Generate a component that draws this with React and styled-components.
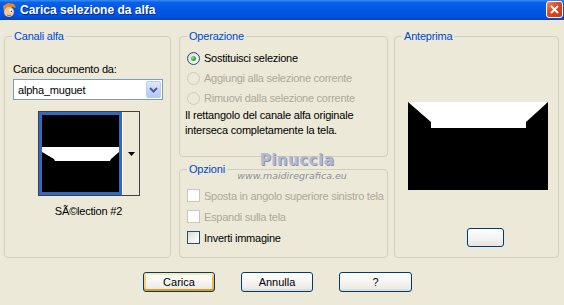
import React from "react";
import styled, { createGlobalStyle, css } from "styled-components";

const GlobalStyle = createGlobalStyle`
  html, body {
    margin: 0;
    padding: 0;
    background: #ece9d8;
  }
  body {
    font-family: "Liberation Sans", Arial, sans-serif;
    font-size: 11px;
    letter-spacing: -0.2px;
    color: #000;
  }
`;

const Window = styled.div`
  position: relative;
  width: 564px;
  height: 305px;
  background: #ece9d8;
  overflow: hidden;
  display: flex;
  flex-direction: column;
`;

const TitleBar = styled.div`
  height: 20px;
  display: flex;
  align-items: center;
  background: linear-gradient(
    to bottom,
    #3a8cf4 0%,
    #0a62e4 12%,
    #0058e6 45%,
    #0052dd 80%,
    #0046c4 100%
  );
`;

const TitleIcon = styled.svg`
  width: 16px;
  height: 16px;
  margin: 0 3px 0 1px;
  flex-shrink: 0;
`;

const TitleText = styled.div`
  flex: 1;
  color: #fff;
  font-size: 12px;
  font-weight: bold;
  letter-spacing: 0;
  text-shadow: 1px 1px 0 #0a2a8a;
`;

const CloseButton = styled.div`
  width: 17px;
  height: 17px;
  margin: 0 1px 1px 0;
  box-sizing: border-box;
  border: 1px solid #fff;
  border-radius: 3px;
  background: linear-gradient(135deg, #f08a6a 0%, #e0461f 45%, #c83a12 100%);
  display: flex;
  align-items: center;
  justify-content: center;
`;

const Body = styled.div`
  flex: 1;
  padding: 16px 0 0 4px;
  display: flex;
  flex-direction: column;
`;

const GroupsRow = styled.div`
  display: flex;
  height: 222px;
`;

const MiddleColumn = styled.div`
  display: flex;
  flex-direction: column;
  justify-content: space-between;
  margin: 0 6px 0 8px;
`;

const Group = styled.div`
  position: relative;
  box-sizing: border-box;
  width: ${(p) => p.$width}px;
  height: ${(p) => p.$height}px;
  border: 1px solid #d0d0bf;
  border-radius: 4px;
  display: flex;
  flex-direction: column;
  padding: ${(p) => p.$pad || "0"};
`;

const Legend = styled.span`
  position: absolute;
  top: -7px;
  left: 7px;
  padding: 0 2px;
  line-height: 13px;
  background: #ece9d8;
  color: #0046d5;
`;

const Label = styled.div`
  line-height: 13px;
`;

const Combo = styled.div`
  margin-top: 3px;
  width: 150px;
  height: 21px;
  box-sizing: border-box;
  border: 1px solid #7f9db9;
  background: #fff;
  display: flex;
  align-items: center;
  padding: 1px;
`;

const ComboText = styled.div`
  flex: 1;
  padding-left: 3px;
`;

const ComboButton = styled.div`
  width: 15px;
  height: 17px;
  box-sizing: border-box;
  border: 1px solid #b9cdf7;
  border-radius: 2px;
  background: linear-gradient(to bottom, #dfe9fd 0%, #c6d6fb 50%, #b2c8f8 100%);
  display: flex;
  align-items: center;
  justify-content: center;
`;

const ThumbRow = styled.div`
  margin: 11px 0 0 25px;
  align-self: flex-start;
  display: flex;
  border: 1px solid #404040;
`;

const ThumbImage = styled.div`
  width: 77px;
  height: 77px;
  border: 3px solid #316ac5;
  background: #000;
  display: flex;
`;

const ThumbDrop = styled.div`
  width: 16px;
  background: #ece9d8;
  border-left: 1px solid #fff;
  display: flex;
  align-items: center;
  justify-content: center;
`;

const Caption = styled.div`
  margin-top: 9px;
  text-align: center;
  line-height: 13px;
  padding-right: 6px;
`;

const OptionRow = styled.div`
  height: ${(p) => p.$h}px;
  display: flex;
  align-items: center;
  gap: 4px;
  white-space: nowrap;
  letter-spacing: -0.25px;
  color: ${(p) => (p.$disabled ? "#aca899" : "#000")};
`;

const Radio = styled.span`
  width: 13px;
  height: 13px;
  flex-shrink: 0;
  box-sizing: border-box;
  border-radius: 50%;
  display: flex;
  align-items: center;
  justify-content: center;
  ${(p) =>
    p.$disabled
      ? css`
          border: 1px solid #cfccbd;
          background: #ece9d8;
        `
      : css`
          border: 1px solid #1c5180;
          background: radial-gradient(circle at 65% 65%, #ffffff 0%, #f0efe8 40%, #d6d3c8 100%);
        `}
`;

const RadioDot = styled.span`
  width: 5px;
  height: 5px;
  border-radius: 50%;
  background: radial-gradient(circle at 35% 35%, #8ee28e 0%, #2fa52f 60%, #1f7f1f 100%);
`;

const Check = styled.span`
  width: 13px;
  height: 13px;
  flex-shrink: 0;
  box-sizing: border-box;
  ${(p) =>
    p.$disabled
      ? css`
          border: 1px solid #cac8bb;
          background: #fff;
        `
      : css`
          border: 1px solid #1c5180;
          background: linear-gradient(135deg, #dcdbd5 0%, #f4f4f0 60%, #ffffff 100%);
        `}
`;

const Desc = styled.div`
  line-height: 15px;
  margin-left: -2px;
`;

const Preview = styled.svg`
  margin-top: 65px;
  margin-left: 3px;
  align-self: center;
  display: block;
`;

const Button = styled.button`
  font-family: "Liberation Sans", Arial, sans-serif;
  font-size: 11px;
  color: #000;
  width: ${(p) => p.$w || 72}px;
  height: ${(p) => p.$h || 20}px;
  padding: 0;
  box-sizing: border-box;
  border: 1px solid #003c74;
  border-radius: 3px;
  background: linear-gradient(to bottom, #ffffff 0%, #f7f7f4 40%, #ecebe4 85%, #d8d6cc 100%);
  ${(p) =>
    p.$default &&
    css`
      box-shadow: inset 0 2px 0 #ffe9a8, inset 0 -2px 0 #e59a18, inset 2px 0 0 #fbd27a,
        inset -2px 0 0 #f5b83c;
    `}
`;

const SmallButton = styled(Button)`
  margin-top: 38px;
  margin-left: 18px;
  align-self: center;
  background: linear-gradient(to bottom, #ffffff 0%, #f4f4f2 50%, #e6e5df 100%);
`;

const ButtonRow = styled.div`
  margin-top: 14px;
  display: flex;
  gap: 26px;
  padding-left: 139px;
`;

const Watermark = styled.div`
  position: absolute;
  left: 226px;
  top: 151px;
  width: 132px;
  text-align: center;
  letter-spacing: 0;
  pointer-events: none;
`;

const WaterName = styled.div`
  font-family: "DejaVu Sans", sans-serif;
  font-weight: bold;
  font-size: 15px;
  line-height: 19px;
  letter-spacing: 0.5px;
  color: #b3b7d0;
  text-shadow: 1px 1px 0 #8e92ad;
  padding-left: 10px;
`;

const WaterUrl = styled.div`
  font-family: "DejaVu Sans", sans-serif;
  font-size: 9.5px;
  line-height: 12px;
  font-style: italic;
  color: #8d8d9c;
`;

const AppIcon = () => (
  <TitleIcon viewBox="0 0 16 16">
    <path d="M2 4 L7 1 L13 2 L15 6 L12 5 L9 6 L5 6 L3 9 Z" fill="#e8872a" />
    <ellipse cx="8" cy="10" rx="5" ry="5" fill="#f6c79a" />
    <ellipse cx="10" cy="9" rx="1.6" ry="2" fill="#fff" />
    <circle cx="10.3" cy="9.3" r="0.8" fill="#1a3c8a" />
    <path d="M6 13 Q8 14.5 10 13" stroke="#a0522d" strokeWidth="0.8" fill="none" />
  </TitleIcon>
);

const App = () => {
  return (
    <Window>
      <GlobalStyle />
      <TitleBar>
        <AppIcon />
        <TitleText>Carica selezione da alfa</TitleText>
        <CloseButton>
          <svg width="11" height="11" viewBox="0 0 11 11">
            <path d="M2 2 L9 9 M9 2 L2 9" stroke="#fff" strokeWidth="2" />
          </svg>
        </CloseButton>
      </TitleBar>

      <Body>
        <GroupsRow>
          <Group $width={167} $height={222} $pad="26px 0 0 8px">
            <Legend>Canali alfa</Legend>
            <Label>Carica documento da:</Label>
            <Combo>
              <ComboText>alpha_muguet</ComboText>
              <ComboButton>
                <svg width="9" height="6" viewBox="0 0 9 6">
                  <path d="M1 1 L4.5 4.5 L8 1" stroke="#4d6185" strokeWidth="2" fill="none" />
                </svg>
              </ComboButton>
            </Combo>
            <ThumbRow>
              <ThumbImage>
                <svg width="77" height="77" viewBox="0 0 77 77">
                  <polygon
                    points="0,32 77,32 77,37 69,44 68,46 13,46 12,44 0,37"
                    fill="#fff"
                  />
                </svg>
              </ThumbImage>
              <ThumbDrop>
                <svg width="7" height="4" viewBox="0 0 7 4">
                  <polygon points="0,0 7,0 3.5,4" fill="#000" />
                </svg>
              </ThumbDrop>
            </ThumbRow>
            <Caption>SÃ©lection #2</Caption>
          </Group>

          <MiddleColumn>
            <Group $width={209} $height={121} $pad="11px 0 0 7px">
              <Legend>Operazione</Legend>
              <OptionRow $h={20}>
                <Radio>
                  <RadioDot />
                </Radio>
                Sostituisci selezione
              </OptionRow>
              <OptionRow $h={20} $disabled>
                <Radio $disabled />
                Aggiungi alla selezione corrente
              </OptionRow>
              <OptionRow $h={20} $disabled>
                <Radio $disabled />
                Rimuovi dalla selezione corrente
              </OptionRow>
              <Desc>
                Il rettangolo del canale alfa originale
                <br />
                interseca completamente la tela.
              </Desc>
            </Group>

            <Group $width={209} $height={89} $pad="15px 0 0 7px">
              <Legend>Opzioni</Legend>
              <OptionRow $h={21} $disabled>
                <Check $disabled />
                Sposta in angolo superiore sinistro tela
              </OptionRow>
              <OptionRow $h={21} $disabled>
                <Check $disabled />
                Espandi sulla tela
              </OptionRow>
              <OptionRow $h={21}>
                <Check />
                Inverti immagine
              </OptionRow>
            </Group>
          </MiddleColumn>

          <Group $width={165} $height={222}>
            <Legend>Anteprima</Legend>
            <Preview width="140" height="88" viewBox="0 0 140 88">
              <rect width="140" height="88" fill="#000" />
              <polygon points="0,0 140,0 118,20 118,26 23,26 23,20" fill="#fff" />
            </Preview>
            <SmallButton $w={37} $h={19} />
          </Group>
        </GroupsRow>

        <ButtonRow>
          <Button $default>Carica</Button>
          <Button>Annulla</Button>
          <Button $w={73}>?</Button>
        </ButtonRow>
      </Body>

      <Watermark>
        <WaterName>Pinuccia</WaterName>
        <WaterUrl>www.maidiregrafica.eu</WaterUrl>
      </Watermark>
    </Window>
  );
};

export default App;
